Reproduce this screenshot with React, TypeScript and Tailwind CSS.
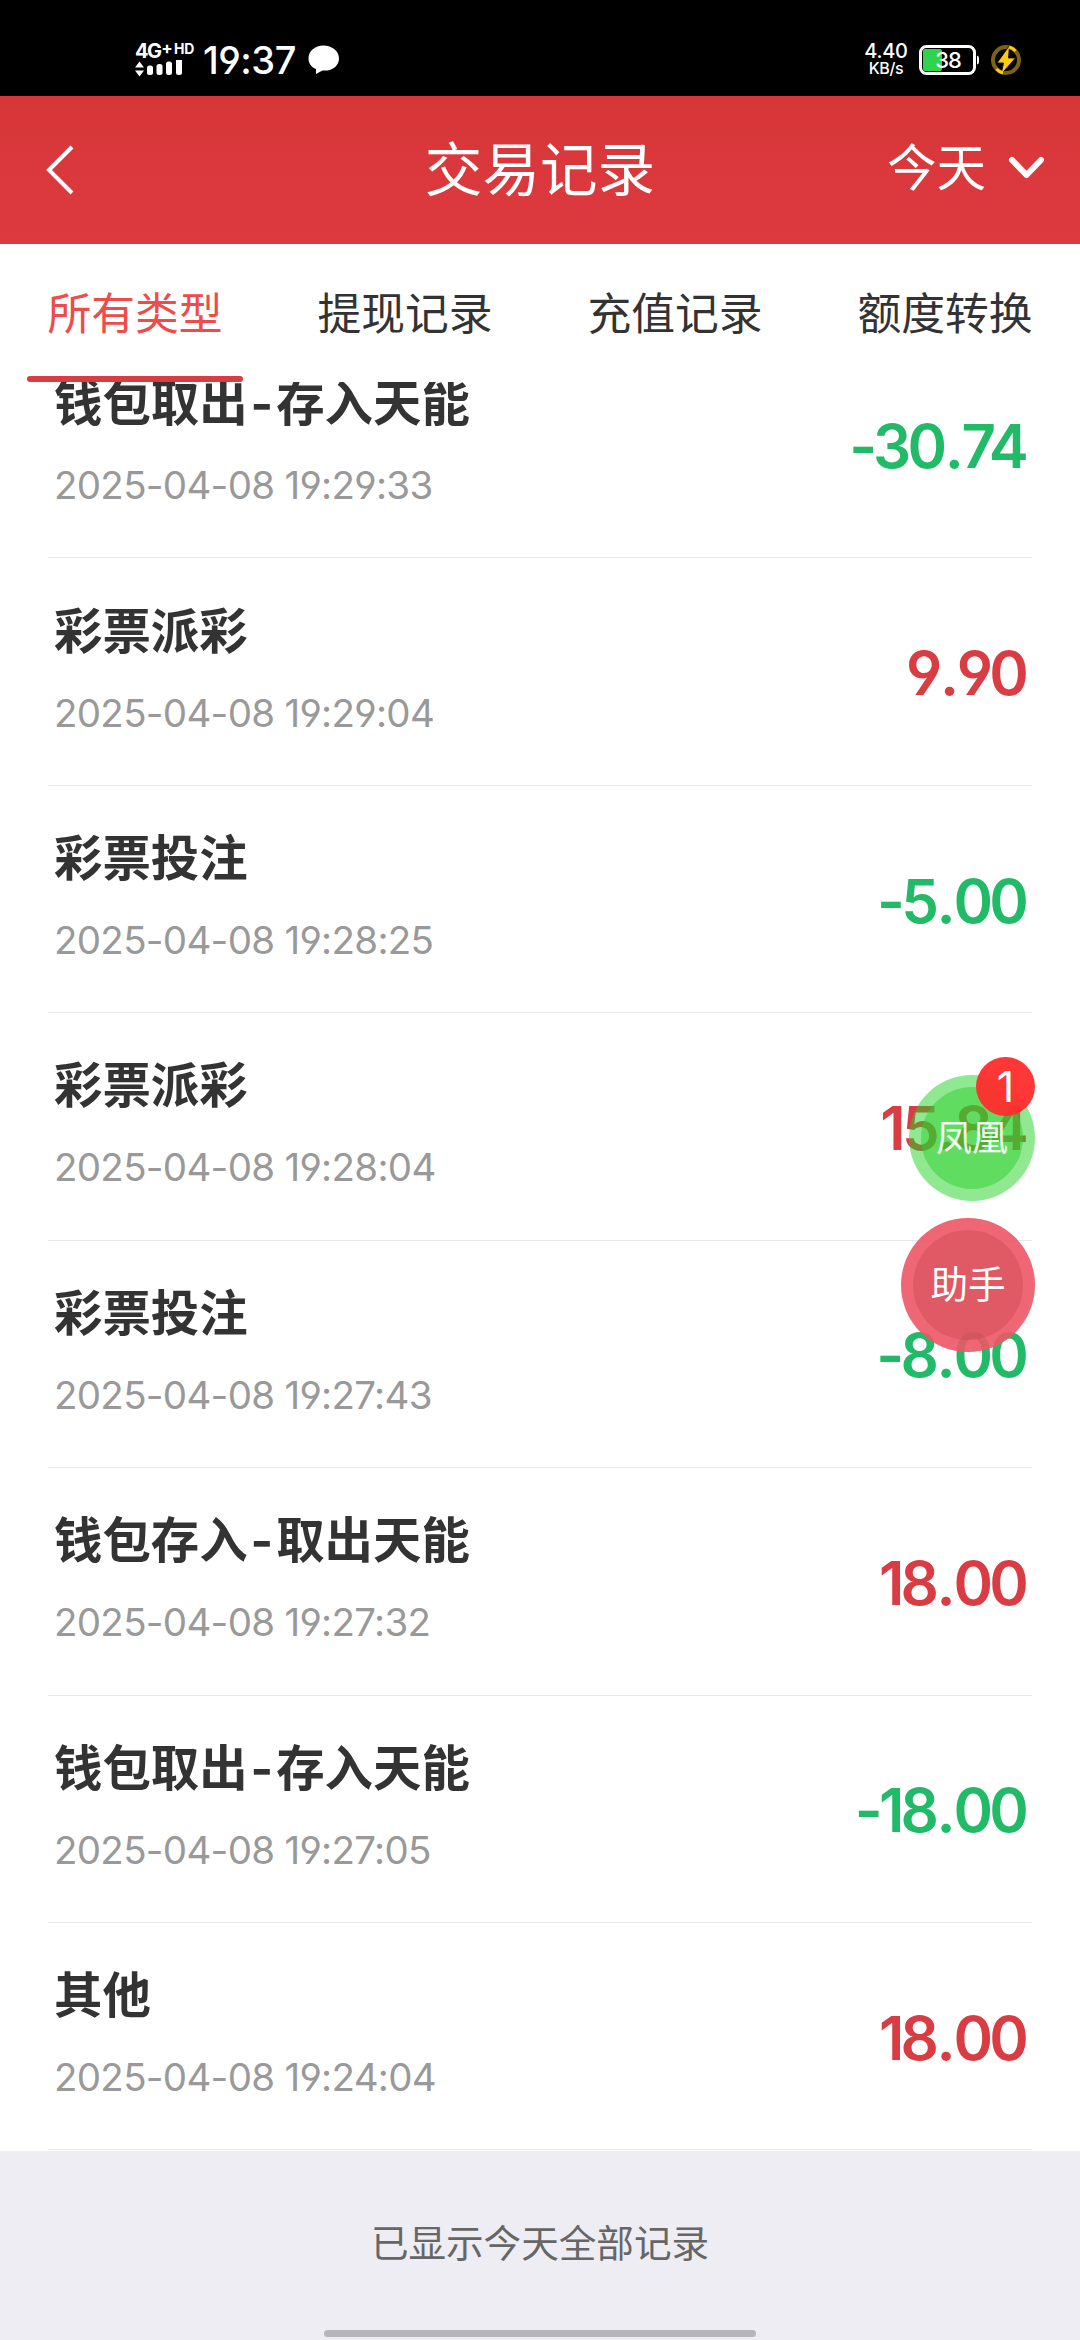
import React from "react";

const tabs = ["所有类型", "提现记录", "充值记录", "额度转换"];

const records = [
  { title: "钱包取出-存入天能", time: "2025-04-08 19:29:33", amount: "-30.74" },
  { title: "彩票派彩", time: "2025-04-08 19:29:04", amount: "9.90" },
  { title: "彩票投注", time: "2025-04-08 19:28:25", amount: "-5.00" },
  { title: "彩票派彩", time: "2025-04-08 19:28:04", amount: "15.84" },
  { title: "彩票投注", time: "2025-04-08 19:27:43", amount: "-8.00" },
  { title: "钱包存入-取出天能", time: "2025-04-08 19:27:32", amount: "18.00" },
  { title: "钱包取出-存入天能", time: "2025-04-08 19:27:05", amount: "-18.00" },
  { title: "其他", time: "2025-04-08 19:24:04", amount: "18.00" },
];

function StatusBar() {
  return (
    <div className="h-24 shrink-0 bg-black text-white flex justify-between pl-[135px] pr-[58px] pt-5">
      <div className="flex items-center h-20">
        <div className="w-[60px] mr-2 flex flex-col">
          <div className="flex items-start h-[17px] leading-none font-bold">
            <span className="text-[20px] leading-[17px] tracking-[-1.6px]">4G</span>
            <span className="ml-px text-[17px] leading-[10px]">+</span>
            <span className="ml-px text-[14px] leading-[11px]">HD</span>
          </div>
          <svg width="50" height="18" viewBox="0 0 50 18" fill="white">
            <path d="M4.500 1.500l4.500 6H0zM4.500 16.500l4.500-6H0z" />
            <rect x="12" y="5.500" width="6" height="9.500" rx="2.500" />
            <rect x="21.500" y="4" width="6" height="11" rx="2.500" />
            <rect x="31" y="1.500" width="6" height="13.500" rx="2.500" />
            <rect x="41" y="-2" width="6" height="17" rx="2.500" />
          </svg>
        </div>
        <span className="text-[38px] font-medium leading-none tracking-[-0.5px]">19:37</span>
        <svg className="ml-3" width="31" height="30" viewBox="0 0 31 30" fill="white">
          <path d="M15.500 0.500C7 0.500 0.500 6 0.500 13.500c0 4.500 2.500 8.500 7.500 10.500v5l6.500-3.500c9.500 1 16.500-4.500 16.500-12S24 0.500 15.500 0.500z" />
        </svg>
      </div>
      <div className="flex items-center h-20">
        <div className="w-[42px] flex flex-col items-center leading-none font-medium">
          <span className="text-[20px] leading-[17px] tracking-[-0.3px]">4.40</span>
          <span className="text-[16px] leading-[17px] tracking-[-0.4px]">KB/s</span>
        </div>
        <svg className="ml-3" width="61" height="31" viewBox="0 0 61 31">
          <rect x="1.500" y="1.500" width="54" height="27" rx="6" fill="black" stroke="white" strokeWidth="3" />
          <rect x="4" y="4" width="19" height="22" rx="2" fill="#2fd44c" />
          <path d="M58 10.500v9q2-0.500 2-2.500v-4q0-2-2-2.500z" fill="white" />
          <text x="29" y="23" fill="white" fontSize="22" textAnchor="middle" fontWeight="500" letterSpacing="-1">38</text>
        </svg>
        <svg className="ml-2.5" width="32" height="32" viewBox="0 0 32 32">
          <circle cx="16" cy="16" r="13" fill="none" stroke="#7d6413" strokeWidth="4" />
          <path d="M19.500 1.500L7 19h6.500L11 30.500 25.500 14H18.500z" fill="#ffc917" stroke="black" strokeWidth="0.800" />
          <path d="M13 29A13 13 0 0 1 6.500 25" fill="none" stroke="#ffc917" strokeWidth="3" />
          <path d="M19 3A13 13 0 0 1 25.500 7" fill="none" stroke="#ffc917" strokeWidth="3" />
        </svg>
      </div>
    </div>
  );
}

function Header() {
  return (
    <header className="relative h-[148px] shrink-0 bg-linear-to-b from-[#d73638] to-[#dd3a3f] text-white flex items-center justify-between pl-[46px] pr-[35px]">
      <svg width="28" height="50" viewBox="0 0 28 50" fill="none" stroke="white" strokeWidth="4">
        <path d="M26 2L3 25l23 23" />
      </svg>
      <h1 className="absolute inset-x-0 pt-0.5 text-center text-[57.6px] leading-none">交易记录</h1>
      <div className="flex items-center gap-[22px] pb-1">
        <span className="pt-0.5 text-[49.500px] leading-none">今天</span>
        <svg width="37" height="24" viewBox="0 0 37 24" fill="none" stroke="white" strokeWidth="6" strokeLinecap="round" strokeLinejoin="round">
          <path d="M4 4l14.500 15L33 4" />
        </svg>
      </div>
    </header>
  );
}

function Tabs() {
  return (
    <nav className="relative z-10 h-[138px] shrink-0 bg-white flex">
      {tabs.map((tab, i) => (
        <div
          key={tab}
          className={
            i === 0
              ? "relative flex-1 text-center text-[43.8px] leading-[141px] text-[#ef4b4b]"
              : "flex-1 text-center text-[43.8px] leading-[141px] text-[#333333]"
          }
        >
          {tab}
          {i === 0 && <div className="absolute left-[27px] bottom-0 w-[216px] h-1.5 rounded-full bg-[#d93c42]" />}
        </div>
      ))}
    </nav>
  );
}

function Record({ title, time, amount }: { title: string; time: string; amount: string }) {
  const [before, after] = title.split("-");
  const [whole, cents] = amount.split(".");
  return (
    <div className="h-[227.43px] shrink-0 border-b border-[#e8e8e8] flex items-center justify-between pl-1.5 pr-0.5">
      <div className="flex flex-col">
        <span className="text-[48.4px] leading-[72px] font-bold text-[#333333]">
          {before}
          {after && <span className="px-[3px]">-</span>}
          {after}
        </span>
        <span className="mt-[17px] mb-[7px] text-[38.500px] leading-[56px] tracking-[-0.7px] text-[#999999]">{time}</span>
      </div>
      <span
        className={
          amount.startsWith("-")
            ? "pt-[3px] pr-[5px] text-[60px] leading-none font-semibold tracking-[-3.8px] text-[#21ba67]"
            : "pt-[3px] pr-[5px] text-[60px] leading-none font-semibold tracking-[-3.8px] text-[#d93c42]"
        }
      >
        {whole}
        <span className="px-[1.500px]">.</span>
        {cents}
      </span>
    </div>
  );
}

function FloatingButtons() {
  return (
    <>
      <div className="absolute z-20 left-[909px] top-[1075px] size-[126px] rounded-full bg-[#21d224]/50 flex items-center justify-center">
        <div className="size-[102px] rounded-full bg-[#30cf32]/50 flex items-center justify-center text-[36px] leading-none text-white/90">
          凤凰
        </div>
        <div className="absolute -top-[18px] right-0 size-[59px] rounded-full bg-[#ff2c2c]/95 flex items-center justify-center text-[43px] leading-none text-white">
          1
        </div>
      </div>
      <div className="absolute z-20 left-[901px] top-[1218px] size-[134px] rounded-full bg-[#ed5766]/90 flex items-center justify-center">
        <div className="size-[110px] rounded-full bg-[#c7484c]/40 flex items-center justify-center text-[37.6px] leading-none text-white">
          助手
        </div>
      </div>
    </>
  );
}

function App() {
  return (
    <div className="relative w-[1080px] h-[2340px] overflow-hidden bg-[#eeedf3] flex flex-col font-[Inter,'Noto_Sans_CJK_SC',sans-serif] [font-feature-settings:'cv03','cv04','calt'_0]">
      <StatusBar />
      <Header />
      <Tabs />
      {/* list is scrolled slightly under the tab bar */}
      <main className="-mt-[51px] shrink-0 bg-white px-12 pb-px flex flex-col">
        {records.map((record) => (
          <Record key={record.time} {...record} />
        ))}
      </main>
      <footer className="flex-1 flex flex-col items-center justify-between pt-[74px] pb-[3px] text-[#666666]">
        <span className="text-[37.6px] leading-[38px]">已显示今天全部记录</span>
        <div className="w-[432px] h-[7px] rounded-full bg-[#b6b5bb]" />
      </footer>
      <FloatingButtons />
    </div>
  );
}

export default App;
